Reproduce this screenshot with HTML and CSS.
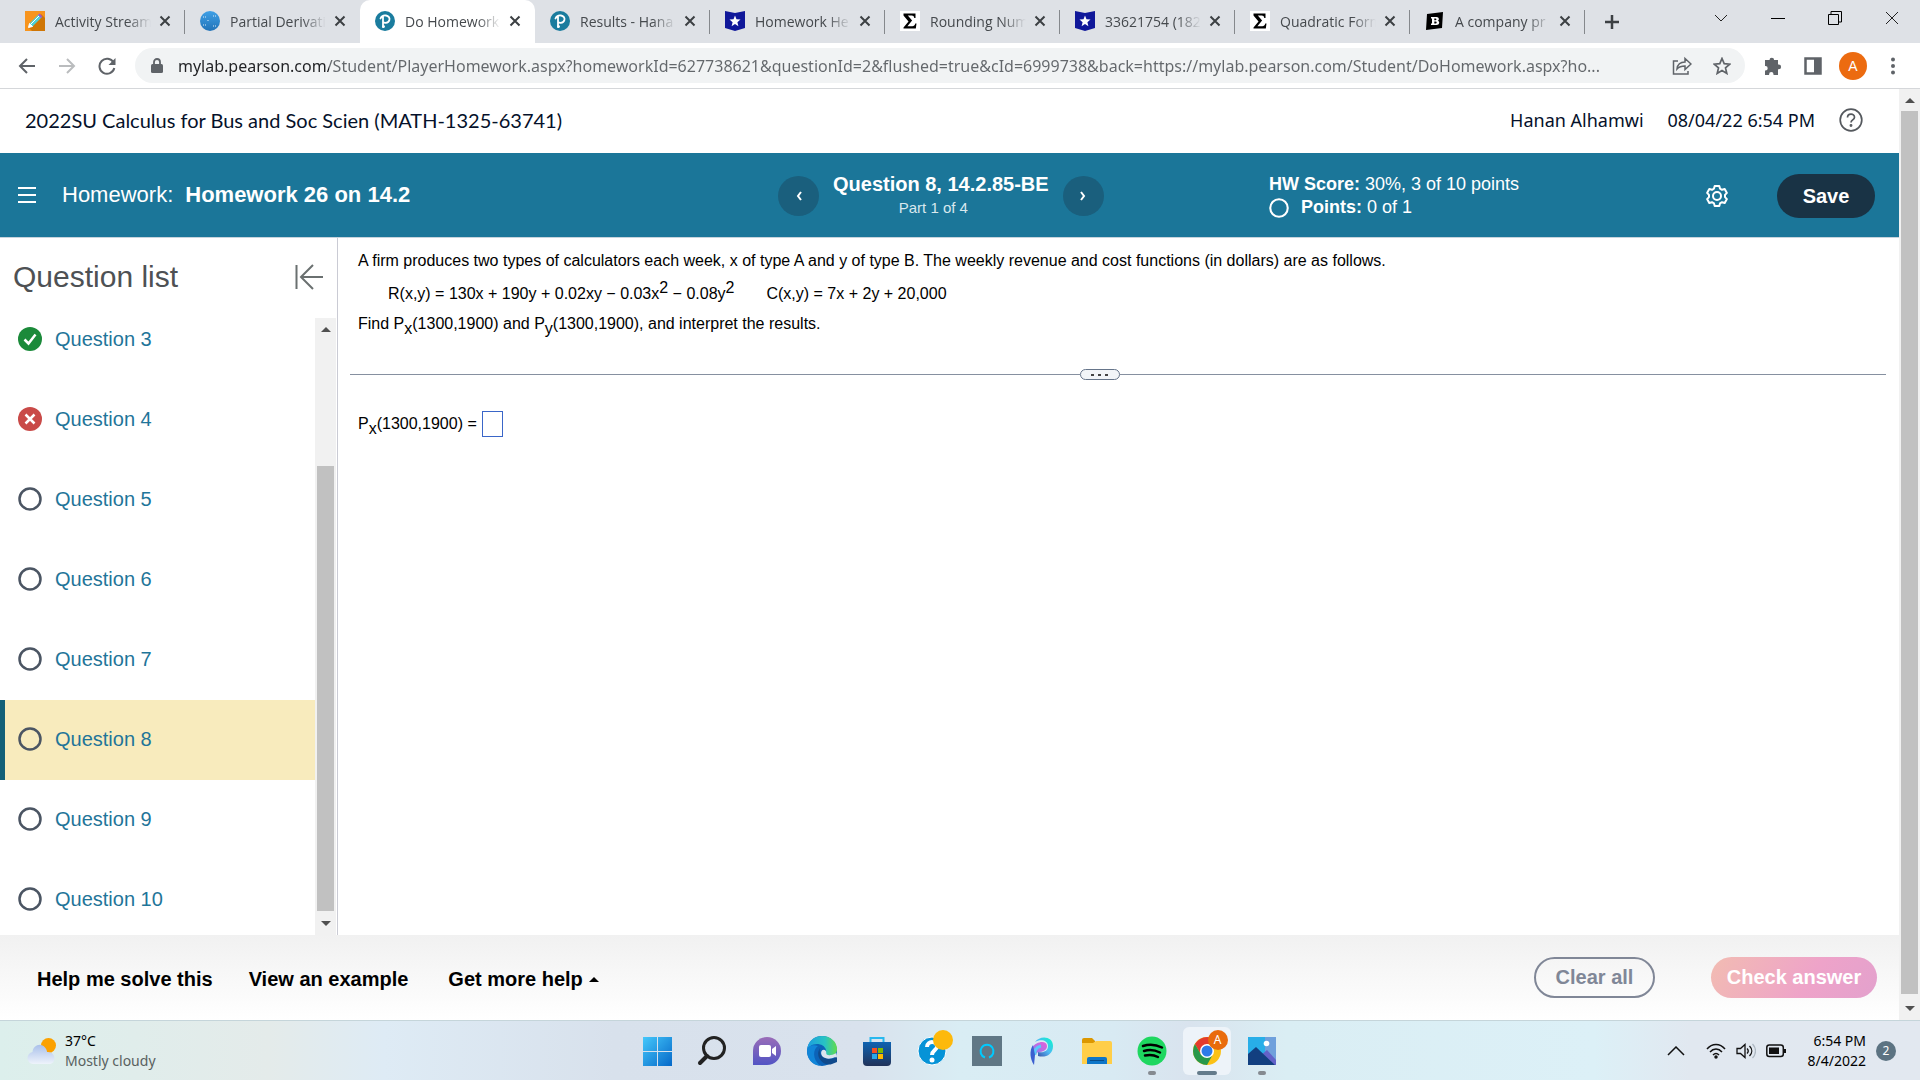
FILE: index.html
```html
<!DOCTYPE html>
<html lang="en">
<head>
  <meta charset="UTF-8">
  <title>Do Homework</title>
  <meta name="viewport" content="width=device-width, initial-scale=1.0">
  <link rel="stylesheet" href="styles.css">
</head>
<body>
  <!-- shared symbols -->
  <svg class="defs" aria-hidden="true">
    <symbol id="x" viewBox="0 0 12 12"><path d="M1.5 1.5l9 9M10.5 1.5l-9 9" stroke="#3c4043" stroke-width="2" fill="none"/></symbol>
    <symbol id="pearson" viewBox="0 0 20 20"><circle cx="10" cy="10" r="10" fill="#1a7c9e"/><path d="M8 16V5.5M5.500 7.500C6.500 5 9 4.200 11 4.500c2.600.4 4 2.400 3.400 4.600-.6 2.200-2.900 3.100-5.200 2.600" stroke="#fff" stroke-width="1.8" fill="none" stroke-linecap="round"/><circle cx="8.600" cy="15.600" r="1.400" fill="#fff"/></symbol>
    <symbol id="star-flag" viewBox="0 0 20 20"><path d="M0 0l10 2 10-2v17l-10 3-10-3z" fill="#10189a"/><path d="M10 4.500l1.500 3.800 4 .3-3.100 2.600 1 4-3.400-2.200-3.400 2.200 1-4-3.100-2.600 4-.3z" fill="#fff"/></symbol>
    <symbol id="sigma" viewBox="0 0 20 20"><path d="M0 0h20v20H0z" fill="#fff"/><path d="M3.500 2.500h12v4.500h-1.200c-.3-1.700-1-2.500-2.600-2.500H7.800l4.300 5-4.700 5.700h4.900c1.600 0 2.500-.8 3-2.600h1.200l-.7 4.900H3.500v-.9l5-6.200-5-6z" fill="#000"/></symbol>
    <symbol id="ring" viewBox="0 0 24 24"><circle cx="12" cy="12" r="10.500" fill="none" stroke="currentColor" stroke-width="2.500"/></symbol>
    <symbol id="up" viewBox="0 0 10 5"><path d="M0 5l5-5 5 5z" fill="currentColor"/></symbol>
    <symbol id="down" viewBox="0 0 10 5"><path d="M0 0l5 5 5-5z" fill="currentColor"/></symbol>
  </svg>

  <div class="tab-strip">
    <div class="tab">
      <svg class="favicon" viewBox="0 0 20 20"><path d="M0 0h20v20H0z" fill="#f7941d"/><path d="M16 3l4 4v13H7l-3-3z" fill="#cf7606"/><path d="M3.500 16.500l1-4 9-9 3 3-9 9z" fill="#4dd0d8"/><path d="M3.500 16.500l1-4 3 3zM6 13l8-8" stroke="#fff" fill="#fff"/><path d="M13 4l1.500-1.500 3 3L16 7z" fill="#a05ac8"/></svg>
      <button class="tab-title">Activity Stream</button><button class="tab-close" aria-label="Close"><svg><use href="#x"/></svg></button>
    </div>
    <div class="tab">
      <svg class="favicon" viewBox="0 0 20 20"><defs><linearGradient id="globe" x2="0" y2="1"><stop stop-color="#3fa0e6"/><stop offset="1" stop-color="#2273b8"/></linearGradient></defs><circle cx="10" cy="10" r="10" fill="url(#globe)"/><path d="M3 6h3M13 5h3M3 14h3M13 15h3M8 9v2" stroke="#dcecf8" stroke-width="1" stroke-dasharray="1 1"/></svg>
      <button class="tab-title">Partial Derivati</button><button class="tab-close" aria-label="Close"><svg><use href="#x"/></svg></button>
    </div>
    <div class="tab active">
      <svg class="favicon"><use href="#pearson"/></svg>
      <button class="tab-title">Do Homework</button><button class="tab-close" aria-label="Close"><svg><use href="#x"/></svg></button>
    </div>
    <div class="tab">
      <svg class="favicon"><use href="#pearson"/></svg>
      <button class="tab-title">Results - Hana</button><button class="tab-close" aria-label="Close"><svg><use href="#x"/></svg></button>
    </div>
    <div class="tab">
      <svg class="favicon"><use href="#star-flag"/></svg>
      <button class="tab-title">Homework He</button><button class="tab-close" aria-label="Close"><svg><use href="#x"/></svg></button>
    </div>
    <div class="tab">
      <svg class="favicon"><use href="#sigma"/></svg>
      <button class="tab-title">Rounding Num</button><button class="tab-close" aria-label="Close"><svg><use href="#x"/></svg></button>
    </div>
    <div class="tab">
      <svg class="favicon"><use href="#star-flag"/></svg>
      <button class="tab-title">33621754 (182</button><button class="tab-close" aria-label="Close"><svg><use href="#x"/></svg></button>
    </div>
    <div class="tab">
      <svg class="favicon"><use href="#sigma"/></svg>
      <button class="tab-title">Quadratic Form</button><button class="tab-close" aria-label="Close"><svg><use href="#x"/></svg></button>
    </div>
    <div class="tab">
      <svg class="favicon" viewBox="0 0 20 20"><path d="M2 3l16-2-1 16-16 2z" fill="#000"/><path d="M6 6h5.500c2.800 0 3 3.300 1.200 3.800 2.400.6 2 4.200-1.200 4.200H6v-1.500h1v-5H6zm3.300 1.500v1.800h1.200c1.200 0 1.200-1.800 0-1.800zm0 3v2h1.400c1.300 0 1.300-2 0-2z" fill="#fff"/></svg>
      <button class="tab-title">A company pr</button><button class="tab-close" aria-label="Close"><svg><use href="#x"/></svg></button>
    </div>
    <button class="new-tab" aria-label="New tab"><svg width="16" height="16"><path d="M8 1v14M1 8h14" stroke="#3c4043" stroke-width="2.500"/></svg></button>
    <div class="window-buttons">
      <button aria-label="Search tabs"><svg width="14" height="8"><path d="M1 1l6 6 6-6" stroke="#222" fill="none"/></svg></button>
      <button aria-label="Minimize"><svg width="14" height="8"><path d="M0 4.500h14" stroke="#000"/></svg></button>
      <button aria-label="Restore"><svg width="14" height="14"><path d="M.5 3.500h10v10H.5zM3 3V.5h10.500V11H11" stroke="#000" fill="none"/></svg></button>
      <button aria-label="Close window"><svg width="14" height="14"><path d="M1 1l12 12M13 1L1 13" stroke="#222"/></svg></button>
    </div>
  </div>

  <div class="toolbar">
    <button aria-label="Back"><svg width="18" height="18"><path d="M17 9H2M9 2L2 9l7 7" stroke="#5f6368" stroke-width="2" fill="none"/></svg></button>
    <button aria-label="Forward"><svg width="18" height="18"><path d="M1 9h15M9 2l7 7-7 7" stroke="#babcbe" stroke-width="2" fill="none"/></svg></button>
    <button aria-label="Reload"><svg width="18" height="18"><path d="M15.500 5.500A7.500 7.500 0 1 0 16.300 11" stroke="#5f6368" stroke-width="2" fill="none"/><path d="M17.500 1v7h-7z" fill="#5f6368"/></svg></button>
    <div class="omnibox">
      <svg width="12" height="16"><rect y="6" width="12" height="9" rx="1.500" fill="#5f6368"/><path d="M3 7V4a3 3 0 0 1 6 0v3" stroke="#5f6368" stroke-width="1.800" fill="none"/></svg>
      <input class="url" type="text" aria-label="Address" value="mylab.pearson.com/Student/PlayerHomework.aspx?homeworkId=627738621&amp;questionId=2&amp;flushed=true&amp;cId=6999738&amp;back=https://mylab.pearson.com/Student/DoHomework.aspx?ho...">
      <button aria-label="Share"><svg width="20" height="20" fill="none" stroke="#5f6368" stroke-width="1.500"><path d="M6 5H1.500v13H16v-3"/><path d="M5 13c.5-4.500 3.500-7 8-7V2.500l6 5.500-6 5.500v-3.500c-3.500 0-6 .8-8 3z"/></svg></button>
      <button aria-label="Bookmark"><svg width="18" height="18"><path d="M9 1.500l2.200 5.200 5.600.5-4.300 3.700 1.300 5.500L9 13.500l-4.800 2.900 1.300-5.500L1.200 7.200l5.600-.5z" stroke="#5f6368" stroke-width="1.700" fill="none"/></svg></button>
    </div>
    <button aria-label="Extensions"><svg width="20" height="18" fill="#5f6368"><path d="M2 3h4.500a2.300 2.300 0 0 1 4.600 0H15v4.500h.7a2.400 2.400 0 0 1 0 4.800H15V18h-4.500v-.7a2.200 2.200 0 0 0-4.400 0v.7H2v-4.500h.5a2.200 2.200 0 0 0 0-4.400H2z"/></svg></button>
    <button aria-label="Side panel"><svg width="18" height="18"><path d="M1.500 1.500h15v15h-15z" fill="#fff" stroke="#5f6368" stroke-width="2.500"/><path d="M10 1h7v16h-7z" fill="#5f6368"/></svg></button>
    <button class="avatar">A</button>
    <button aria-label="Menu"><svg width="6" height="18" fill="#5f6368"><circle cx="3" cy="2.500" r="2"/><circle cx="3" cy="9" r="2"/><circle cx="3" cy="15.500" r="2"/></svg></button>
  </div>

  <div class="viewport">
    <div class="page">
      <header class="course-bar">
        <span class="course">2022SU Calculus for Bus and Soc Scien (MATH-1325-63741)</span>
        <span>Hanan Alhamwi</span>
        <span>08/04/22 6:54 PM</span>
        <button aria-label="Help"><svg width="24" height="24" fill="none" stroke="#55595e" stroke-width="1.700"><circle cx="12" cy="12" r="10.800"/><path d="M8.500 9.500c0-4.500 7-4.500 7-.3 0 2.600-3.500 2.800-3.500 5.300"/><circle cx="12" cy="17.500" r=".6" fill="#55595e"/></svg></button>
      </header>

      <div class="hw-bar">
        <div class="hw-title">
          <button aria-label="Menu"><svg width="18" height="18"><path d="M0 2h18M0 9h18M0 16h18" stroke="#fff" stroke-width="2"/></svg></button>
          <span>Homework:</span><strong>Homework 26 on 14.2</strong>
        </div>
        <div class="hw-nav">
          <button class="round" aria-label="Previous"><svg width="8" height="12"><path d="M6 2L3 6l3 4" stroke="#fff" stroke-width="2" fill="none"/></svg></button>
          <div class="hw-question"><strong>Question 8, 14.2.85-BE</strong><span>Part 1 of 4</span></div>
          <button class="round" aria-label="Next"><svg width="8" height="12"><path d="M2 2l3 4-3 4" stroke="#fff" stroke-width="2" fill="none"/></svg></button>
        </div>
        <div class="hw-right">
          <div class="score">
            <div><b>HW Score:</b> 30%, 3 of 10 points</div>
            <div class="points"><svg width="20" height="20"><use href="#ring"/></svg><span><b>Points:</b> 0 of 1</span></div>
          </div>
          <button class="gear" aria-label="Settings"><svg width="24" height="24" fill="none" stroke="#fff" stroke-width="2"><path d="M9.700 2h4.600l.7 2.600 2 1.200 2.700-.8 2.200 3.900-1.900 2v2.200l1.900 2-2.200 3.900-2.700-.8-2 1.200-.7 2.600H9.700L9 19.400l-2-1.200-2.700.8-2.200-3.900 1.900-2v-2.200l-1.900-2L4.300 5l2.700.8 2-1.200z" stroke-linejoin="round"/><circle cx="12" cy="12" r="4"/></svg></button>
          <button class="save">Save</button>
        </div>
      </div>

      <div class="content">
        <aside class="sidebar">
          <div class="side-head">
            <h2>Question list</h2>
            <button aria-label="Collapse"><svg width="28" height="26" fill="none" stroke="#6a7070" stroke-width="2"><path d="M1.500 1v24M28 13H6M18 1L6 13l12 12"/></svg></button>
          </div>
          <div class="side-body">
            <ul class="questions">
              <li><svg><circle cx="12" cy="12" r="12" fill="#1b8a3a"/><path d="M6.500 12.500l4 4 7-9" stroke="#fff" stroke-width="2.500" fill="none"/></svg><a href="#q3">Question 3</a></li>
              <li><svg><circle cx="12" cy="12" r="12" fill="#c94a48"/><path d="M7.500 7.500l9 9m0-9l-9 9" stroke="#fff" stroke-width="2.500"/></svg><a href="#q4">Question 4</a></li>
              <li><svg><use href="#ring"/></svg><a href="#q5">Question 5</a></li>
              <li><svg><use href="#ring"/></svg><a href="#q6">Question 6</a></li>
              <li><svg><use href="#ring"/></svg><a href="#q7">Question 7</a></li>
              <li class="current"><svg><use href="#ring"/></svg><a href="#q8">Question 8</a></li>
              <li><svg><use href="#ring"/></svg><a href="#q9">Question 9</a></li>
              <li><svg><use href="#ring"/></svg><a href="#q10">Question 10</a></li>
            </ul>
            <div class="scrollbar">
              <svg width="10" height="5"><use href="#up"/></svg>
              <div class="track side-track"><div class="thumb"></div></div>
              <svg width="10" height="5"><use href="#down"/></svg>
            </div>
          </div>
        </aside>

        <main class="exercise">
          <p>A firm produces two types of calculators each week, x of type A and y of type B. The weekly revenue and cost functions (in dollars) are as follows.</p>
          <p class="functions"><span>R(x,y) = 130x + 190y + 0.02xy − 0.03x<sup>2</sup> − 0.08y<sup>2</sup></span><span>C(x,y) = 7x + 2y + 20,000</span></p>
          <p>Find P<sub>x</sub>(1300,1900) and P<sub>y</sub>(1300,1900), and interpret the results.</p>
          <div class="divider"><button class="grip" aria-label="Resize"><i></i><i></i><i></i></button></div>
          <p class="answer"><label for="px">P<sub>x</sub>(1300,1900) =</label><input id="px" type="text"></p>
        </main>
      </div>

      <footer class="actions">
        <button class="help">Help me solve this</button>
        <button class="help">View an example</button>
        <button class="help more">Get more help <svg width="10" height="5"><use href="#up"/></svg></button>
        <button class="clear">Clear all</button>
        <button class="check">Check answer</button>
      </footer>
    </div>
    <div class="scrollbar">
      <svg width="10" height="5"><use href="#up"/></svg>
      <div class="track"><div class="thumb"></div></div>
      <svg width="10" height="5"><use href="#down"/></svg>
    </div>
  </div>

  <div class="taskbar">
    <div class="weather">
      <svg width="30" height="28"><defs><linearGradient id="cl" x2="0" y2="1"><stop stop-color="#a9c0ea"/><stop offset="1" stop-color="#eef3fb"/></linearGradient></defs><circle cx="21.500" cy="8.500" r="7.500" fill="#fba100"/><path d="M6 27a6 6 0 0 1-.5-11.900C6 8 14 5 18 10.500c1.500 1.800 2 3.300 2 4.500 9-1 10 12 2 12z" fill="url(#cl)"/></svg>
      <div><div>37°C</div><div class="muted">Mostly cloudy</div></div>
    </div>
    <div class="apps">
      <button aria-label="Start"><svg viewBox="0 0 30 30"><defs><linearGradient id="win" x2="1" y2="1"><stop stop-color="#45c8fb"/><stop offset="1" stop-color="#0568c8"/></linearGradient></defs><path d="M1 1h14v14H1zM16 1h14v14H16zM1 16h14v14H1zM16 16h14v14H16z" fill="url(#win)"/></svg></button>
      <button aria-label="Search"><svg viewBox="0 0 30 30" fill="none" stroke="#222"><circle cx="17" cy="12" r="10.500" stroke-width="3"/><path d="M10 20l-7 7" stroke-width="4" stroke-linecap="round"/></svg></button>
      <button aria-label="Chat"><svg viewBox="0 0 30 30"><defs><linearGradient id="chat" x2="0" y2="1"><stop stop-color="#9a6db8"/><stop offset="1" stop-color="#5254c4"/></linearGradient></defs><path d="M1 29V15A14 14 0 1 1 15 29z" fill="url(#chat)"/><rect x="7" y="9" width="12" height="12" rx="2" fill="#fff"/><path d="M20 13l4-3v10l-4-3z" fill="#fff"/></svg></button>
      <button aria-label="Edge"><svg viewBox="0 0 30 30"><defs><linearGradient id="edge"><stop stop-color="#1c9de0"/><stop offset=".6" stop-color="#28c3c3"/><stop offset="1" stop-color="#62dc4b"/></linearGradient></defs><circle cx="15" cy="15" r="15" fill="#0c63b8"/><path d="M0 14C1 5 7 0 15 0c9 0 15 6 15 13 0 6-5 8-10 6-3-1 0-2-1-5-1-4-5-6-9-6-5 0-9 3-10 6z" fill="url(#edge)"/><path d="M0 14c1-4 6-6 11-4-5 3-6 13 2 19.800C5 29 0 23 0 14z" fill="#1185d8"/><path d="M13 12c-2 8 6 13 15 10l2-2v6l-5 2c-8 3-18-7-12-16z" fill="#104a8c"/><path d="M30 21.500l-1.800-.5c-8 4-15 0-14-5 1-4 6-2 5 1 0 3 5 3 10 0z" fill="#dbe4ee"/></svg></button>
      <button aria-label="Store"><svg viewBox="0 0 30 30"><defs><linearGradient id="store" x2="0" y2="1"><stop stop-color="#0e63b2"/><stop offset="1" stop-color="#213259"/></linearGradient></defs><path d="M8.500 7V2h13v5" fill="none" stroke="#28b8ee" stroke-width="2"/><path d="M1 6h28v20a4 4 0 0 1-4 4H5a4 4 0 0 1-4-4z" fill="url(#store)"/><path d="M10 12h5v5h-5z" fill="#f25022"/><path d="M16 12h5v5h-5z" fill="#7fba00"/><path d="M10 18h5v5h-5z" fill="#28a8ea"/><path d="M16 18h5v5h-5z" fill="#ffb900"/></svg></button>
      <button aria-label="Get help"><svg viewBox="0 0 30 30"><circle cx="15" cy="15" r="14" fill="#0693d7" stroke="#fff"/><path d="M10 11c0-7 11-6 10 0-.5 3-5 3.500-5 8" fill="none" stroke="#fff" stroke-width="4"/><circle cx="15" cy="24" r="2.500" fill="#fff"/></svg><span class="badge yellow"></span></button>
      <button aria-label="Alexa"><svg viewBox="0 0 30 30"><path d="M0 0h30v30H0z" fill="#607785"/><path d="M13 21.500a6.500 6.500 0 1 1 4 0" fill="none" stroke="#00caff" stroke-width="2"/></svg></button>
      <button aria-label="Picsart"><svg viewBox="0 0 30 30"><defs><linearGradient id="pa" x1="1" x2="0" y2="1"><stop stop-color="#00ffc8"/><stop offset=".5" stop-color="#4fb9f4"/><stop offset="1" stop-color="#3c3f9e"/></linearGradient><linearGradient id="pb" x1="1" x2="0" y2="1"><stop stop-color="#e65fd8"/><stop offset="1" stop-color="#8a7df0"/></linearGradient></defs><path d="M8 6C13-1 26 0 26 10c0 9-8 12-15 10v-4c6 1 10-1 10-6 0-6-8-7-13-4z" fill="url(#pa)"/><path d="M5 12C9 5 20 4 20 10c0 4-4 6-9 6l-2 2z" fill="url(#pb)"/><path d="M14 10c-5 1-7 5-6 9" stroke="#5ac8fa" stroke-width="3" fill="none"/><path d="M6 9c-4 6-3 14 1 20l1-10z" fill="#3b5fd0"/></svg></button>
      <button aria-label="Files"><svg viewBox="0 0 30 30"><path d="M0 4a2 2 0 0 1 2-2h8l3 3v6H0z" fill="#dc9700"/><path d="M0 7h11l3-2h14a2 2 0 0 1 2 2v21H0z" fill="#ffce48"/><path d="M5 28v-5a2 2 0 0 1 2-2h16a2 2 0 0 1 2 2v5z" fill="#0e76c8"/><path d="M8 24.500h14" stroke="#084c88"/></svg></button>
      <button aria-label="Spotify"><svg viewBox="0 0 30 30"><circle cx="15" cy="15" r="14.500" fill="#1ed760"/><path d="M6 10c6-2 13-1.500 19 1.500M7 15c5-1.500 11-1 16 1.500M8 19.500c4-1 9-.7 13 1.500" fill="none" stroke="#000" stroke-width="2.500" stroke-linecap="round"/></svg><span class="running"></span></button>
      <button class="open" aria-label="Chrome"><svg viewBox="0 0 30 30"><circle cx="15" cy="15" r="14" fill="#fbc116"/><path d="M2.900 8A14 14 0 0 1 27.100 8H15z" fill="#e33b2e"/><path d="M2.900 8L15 6v10L9 18.500z" fill="#e33b2e"/><path d="M2.900 8A14 14 0 0 0 15 29l5-9-11-1.500z" fill="#27984a"/><circle cx="15" cy="15" r="7" fill="#fff"/><circle cx="15" cy="15" r="5.500" fill="#2d7ae8"/></svg><span class="badge orange">A</span><span class="running wide"></span></button>
      <button aria-label="Photos"><svg viewBox="0 0 30 30"><path d="M1 1h28v28H1z" fill="#28aee8"/><path d="M18 1h11v28H18z" fill="#6fa0dc"/><path d="M13 20l7-6 9 10v5H13z" fill="#6262c8"/><path d="M1 18l8-7 19 18H1z" fill="#123f80"/><circle cx="19.500" cy="7.500" r="2.800" fill="#fff"/></svg><span class="running"></span></button>
    </div>
    <div class="tray">
      <button aria-label="Hidden icons"><svg width="18" height="10"><path d="M1 9l8-8 8 8" stroke="#111" stroke-width="1.500" fill="none"/></svg></button>
      <svg width="20" height="16" fill="none" stroke="#111" stroke-width="1.500"><path d="M1 6c5-6 13-6 18 0M4 9c3.500-4 8.500-4 12 0M7 12c2-2 4-2 6 0"/><circle cx="10" cy="14" r="1" fill="#111"/></svg>
      <svg width="20" height="16" fill="none" stroke="#111" stroke-width="1.300"><path d="M1 5.500h3.500L9 1.500v13l-4.500-4H1zM11 5.500c1.500 1.500 1.500 3.500 0 5M13.500 3c3 3 3 7 0 10"/><path d="M16.500 1c4 4 4 10 0 14" stroke="#aeb8c2"/></svg>
      <svg width="20" height="14"><rect x=".8" y="1" width="16.500" height="11.500" rx="2.500" fill="none" stroke="#111" stroke-width="1.500"/><path d="M3 3.500h10v6.500H3zM18 5h2v4h-2z" fill="#111"/></svg>
      <div class="clock"><div>6:54 PM</div><div>8/4/2022</div></div>
      <span class="count">2</span>
    </div>
  </div>
</body>
</html>
```
FILE: styles.css
```css
* {
  box-sizing: border-box;
}
body {
  margin: 0;
  height: 100vh;
  display: flex;
  flex-direction: column;
  overflow: hidden;
  font-family: "Liberation Sans", Arial, sans-serif;
  color: #000;
  background: #fff;
}
button {
  padding: 0;
  border: none;
  background: none;
  font: inherit;
  color: inherit;
  display: flex;
  align-items: center;
  justify-content: center;
  white-space: nowrap;
  cursor: pointer;
}
svg {
  display: block;
  flex: none;
}
.defs {
  position: absolute;
  width: 0;
  height: 0;
}

/* browser tabs */
.tab-strip {
  height: 43px;
  flex: none;
  display: flex;
  padding-left: 10px;
  background: #dee1e6;
  font: 14px "Open Sans", "Noto Sans", sans-serif;
  color: #45494d;
}
.tab {
  width: 175px;
  display: flex;
  align-items: center;
  padding: 0 12px 1px 15px;
  position: relative;
}
.tab::after {
  content: "";
  position: absolute;
  right: 0;
  top: 10px;
  width: 1px;
  height: 24px;
  background: #85888c;
}
.tab.active::after,
.tab:has(+ .active)::after {
  display: none;
}
.tab.active {
  background: #fff;
  border-radius: 10px 10px 0 0;
}
.favicon {
  width: 20px;
  height: 20px;
  margin-right: 10px;
}
.tab-title {
  flex: 1;
  min-width: 0;
  justify-content: flex-start;
  overflow: hidden;
  mask-image: linear-gradient(to right, #000 75%, transparent);
}
.tab-close {
  width: 16px;
  height: 20px;
  margin-left: 6px;
}
.tab-close svg {
  width: 12px;
  height: 12px;
}
.new-tab {
  width: 54px;
}
.window-buttons {
  margin-left: auto;
  display: flex;
  height: 36px;
}
.window-buttons button {
  width: 57px;
}

/* address row */
.toolbar {
  height: 46px;
  flex: none;
  display: flex;
  align-items: center;
  padding: 0 7px;
  border-bottom: 1px solid #d5d7da;
}
.toolbar button {
  width: 40px;
  height: 32px;
}
.omnibox {
  flex: 1;
  height: 35px;
  margin: 0 8px;
  padding: 0 3px 0 16px;
  display: flex;
  align-items: center;
  border-radius: 18px;
  background: #f1f3f4;
}
.url {
  flex: 1;
  min-width: 0;
  border: none;
  padding: 0 0 0 15px;
  font: 16px "Noto Sans", sans-serif;
  color: #63676b;
  background: linear-gradient(to right, #202124 166px, #63676b 166px);
  background-clip: text;
  -webkit-text-fill-color: transparent;
}
.toolbar .avatar {
  width: 28px;
  height: 28px;
  margin: 0 6px;
  border-radius: 50%;
  background: #ec6b10;
  color: #fff;
  font-size: 14px;
}

/* page and its scrollbar */
.viewport {
  flex: 1;
  min-height: 0;
  display: flex;
}
.page {
  flex: 1;
  min-width: 0;
  display: flex;
  flex-direction: column;
}
.scrollbar {
  width: 21px;
  display: flex;
  flex-direction: column;
  align-items: center;
  justify-content: space-between;
  padding: 9px 0;
  background: #f1f1f1;
  color: #505050;
}
.track {
  flex: 1;
  width: 17px;
  margin: 8px 0 12px;
}
.thumb {
  height: 100%;
  background: #c1c1c1;
}

.course-bar {
  height: 64px;
  flex: none;
  display: flex;
  align-items: center;
  gap: 24px;
  padding: 0 36px 2px 25px;
  font: 18px "Noto Sans", sans-serif;
  color: #05112a;
}
.course {
  margin-right: auto;
  font-family: Lato, sans-serif;
  font-size: 20px;
}

.hw-bar {
  height: 85px;
  flex: none;
  display: grid;
  grid-template-columns: 778fr 491fr 630fr;
  align-items: center;
  background: #1b7699;
  border-bottom: 1px solid #c7d3dc;
  color: #fff;
}
.hw-title {
  display: flex;
  align-items: center;
  gap: 12px;
  padding-left: 18px;
  font-size: 22px;
}
.hw-title button {
  margin-right: 14px;
}
.hw-nav {
  display: flex;
  align-items: center;
  gap: 14px;
  padding-top: 2px;
}
.round {
  width: 41px;
  height: 40px;
  border-radius: 50%;
  background: #1a5f7d;
}
.hw-question {
  display: flex;
  flex-direction: column;
  align-items: center;
  font-size: 20px;
  line-height: 23px;
}
.hw-question span {
  padding-right: 15px;
  font-size: 15px;
  color: #d9e8ee;
}
.hw-right {
  display: flex;
  align-items: center;
  padding: 2px 24px 0 0;
}
.score {
  font-size: 18px;
  line-height: 23px;
  margin-right: auto;
}
.points {
  display: flex;
  align-items: center;
  gap: 12px;
}
.gear {
  margin-right: 48px;
}
.save {
  width: 98px;
  height: 44px;
  border-radius: 22px;
  background: #193345;
  font-size: 20px;
  font-weight: bold;
}

/* question list */
.content {
  flex: 1;
  min-height: 0;
  display: flex;
}
.sidebar {
  width: 338px;
  flex: none;
  display: flex;
  flex-direction: column;
  border-right: 1px solid #cacbd4;
}
.side-head {
  height: 80px;
  flex: none;
  display: flex;
  justify-content: space-between;
  align-items: center;
  padding: 0 14px 2px 13px;
}
.side-head h2 {
  margin: 0;
  font-size: 30px;
  font-weight: normal;
  color: #4e5154;
}
.side-body {
  flex: 1;
  min-height: 0;
  display: flex;
  overflow: hidden;
  padding-right: 1px;
}
.questions {
  flex: 1;
  list-style: none;
  margin: -18px 0 0;
  padding: 0;
}
.questions li {
  height: 80px;
  display: flex;
  align-items: center;
  gap: 13px;
  padding: 0 0 2px 18px;
  color: #4b5563;
}
.questions svg {
  width: 24px;
  height: 24px;
}
.questions a {
  font-size: 20px;
  color: #1f7599;
  text-decoration: none;
}
.questions .current {
  background: #f8ebbd;
  border-left: 5px solid #136078;
  padding-left: 13px;
}
.side-track {
  display: flex;
  align-items: flex-end;
  margin-bottom: 10px;
}
.side-track .thumb {
  width: 100%;
  height: 78%;
}

/* exercise */
.exercise {
  flex: 1;
  padding: 12px 11px 0 12px;
  font-size: 16px;
}
.exercise p {
  margin: 0;
  padding-left: 8px;
  line-height: 22px;
}
.exercise sub,
.exercise sup {
  font-size: 16px;
  line-height: 0;
}
.exercise sub {
  vertical-align: -5px;
}
.exercise sup {
  vertical-align: 6px;
}
.exercise .functions {
  display: flex;
  gap: 32px;
  padding: 11px 0 8px 38px;
}
.divider {
  display: flex;
  align-items: center;
  margin: 34px 2px 31px 0;
}
.divider::before,
.divider::after {
  content: "";
  flex: 20;
  height: 1px;
  background: #8690a0;
}
.divider::after {
  flex: 21;
}
.grip {
  width: 40px;
  height: 11px;
  gap: 4px;
  border: 1px solid #66758a;
  border-radius: 6px;
  background: #f2f5f8;
}
.grip i {
  width: 3px;
  height: 2px;
  background: #444;
}
.answer {
  display: flex;
  align-items: center;
  gap: 5px;
}
.answer input {
  width: 21px;
  height: 26px;
  padding: 0;
  border: 1px solid #3a66c8;
}

/* bottom buttons */
.actions {
  height: 85px;
  flex: none;
  display: flex;
  align-items: center;
  padding: 0 22px 0 37px;
  background: linear-gradient(#f1f1f1, #fff);
  font-size: 20px;
  font-weight: bold;
}
.help {
  margin-right: 36px;
  padding-top: 3px;
}
.more {
  gap: 6px;
  margin: 0 auto 0 4px;
}
.clear,
.check {
  height: 41px;
  border-radius: 21px;
}
.clear {
  width: 121px;
  margin-right: 56px;
  border: 2px solid #808797;
  color: #808797;
}
.check {
  width: 166px;
  background: linear-gradient(120deg, #f2bcb2, #eea3c9 60%, #e3a1cd);
  color: #fff;
}

/* taskbar */
.taskbar {
  height: 60px;
  flex: none;
  display: grid;
  grid-template-columns: 1fr auto 1fr;
  align-items: center;
  border-top: 1px solid #c5d5da;
  background: linear-gradient(to right, #dcefec, #e4ebea 14%, #deebf5 20%, #d8e1ec 32%, #d9e2ed 45%, #d9edf4 50%, #d8eaf3 58%, #d9e3ee 62%, #daeef4 67%, #dcf0f7 83%, #e1e8f0 88%, #e2e8f0);
  font: 14px "Noto Sans", sans-serif;
  line-height: 20px;
}
.weather {
  display: flex;
  align-items: center;
  gap: 8px;
  padding-left: 27px;
}
.muted {
  color: #59615f;
}
.apps {
  display: flex;
  gap: 7px;
  padding-right: 2px;
}
.apps button {
  position: relative;
  width: 48px;
  height: 48px;
  border-radius: 6px;
}
.apps svg {
  width: 30px;
  height: 30px;
}
.apps .open {
  background: #edf3f9;
}
.badge {
  position: absolute;
  top: 3px;
  right: 3px;
  width: 20px;
  height: 20px;
  border-radius: 50%;
  font-size: 12px;
  line-height: 20px;
  color: #fff;
}
.yellow {
  background: #fdb90c;
}
.orange {
  background: #e96b0c;
}
.running {
  position: absolute;
  bottom: 0;
  width: 8px;
  height: 4px;
  border-radius: 2px;
  background: #858a90;
}
.wide {
  width: 20px;
  background: #647b8b;
}
.tray {
  display: flex;
  align-items: center;
  justify-content: flex-end;
  gap: 10px;
  padding-right: 24px;
}
.tray button {
  margin-right: 11px;
}
.clock {
  margin-left: 12px;
  text-align: right;
}
.count {
  width: 20px;
  height: 20px;
  border-radius: 50%;
  background: #5c7382;
  color: #fff;
  font-size: 12px;
  text-align: center;
}
```
